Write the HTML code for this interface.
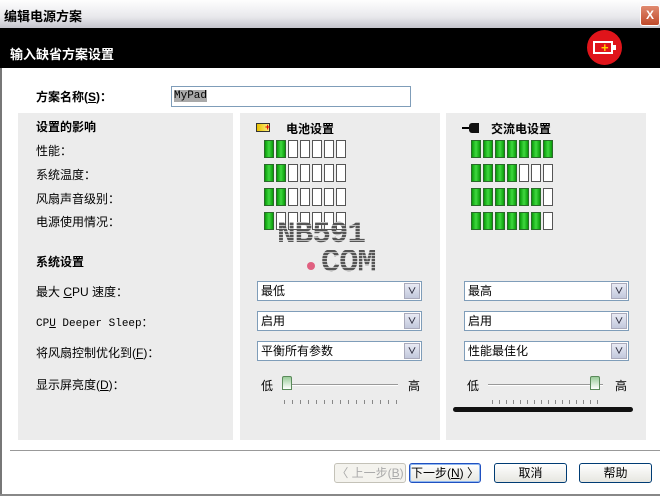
<!DOCTYPE html><html><head><meta charset="utf-8"><style>
*{margin:0;padding:0;box-sizing:border-box}
body{width:660px;height:496px;position:relative;background:#fff;font-family:"Liberation Sans","Noto Sans CJK SC","WenQuanYi Zen Hei",sans-serif;font-size:12px;color:#000;overflow:hidden}
.a{position:absolute}
.b{font-weight:bold}
.panel{position:absolute;background:#ececec;top:113px;height:327px}
.bar{position:absolute;width:10px;height:18px;border:1px solid #555;background:#fff}
.g{background:linear-gradient(90deg,#0a9a0a,#3fd93f 50%,#0a9a0a);border-color:#2a6a2a}
.sel{position:absolute;height:20px;background:#fff;border:1px solid #7f9db9;font-size:12px;line-height:18px;padding-left:3px}
.sel i{position:absolute;right:1px;top:1px;width:16px;height:16px;background:linear-gradient(#e8eaf4,#c2c8dc);border:1px solid #aab;font-style:normal;font-size:9px;line-height:14px;text-align:center;color:#334;font-weight:bold}
.btn{position:absolute;top:463px;height:20px;border:1px solid #003c74;border-radius:3px;background:linear-gradient(#fff,#e6e6e0);text-align:center;line-height:18px;font-size:12px}
.wm{position:absolute;font-family:'Liberation Mono',monospace;font-weight:bold;color:#555;background:repeating-linear-gradient(#555 0 2px,#bbb 2px 3px);-webkit-background-clip:text;background-clip:text;-webkit-text-fill-color:transparent}
</style></head><body>
<div class="a" style="left:0;top:0;width:660px;height:28px;background:linear-gradient(#fefefe,#e8e8ec 60%,#c4c4cc)"></div>
<div class="a b" style="left:4px;top:6px;font-size:13px">编辑电源方案</div>
<div class="a" style="left:640px;top:5px;width:20px;height:21px;background:linear-gradient(#e08a70,#c04a2a);border:1px solid #fff;border-radius:3px;color:#fff;text-align:center;line-height:19px;font-weight:bold">X</div>
<div class="a" style="left:0;top:28px;width:660px;height:40px;background:#000"></div>
<div class="a b" style="left:10px;top:44px;color:#fff;font-size:13px">输入缺省方案设置</div>
<div class="a" style="left:587px;top:30px;width:35px;height:35px;border-radius:50%;background:#e0141a"></div>
<div class="a" style="left:593px;top:41px;width:20px;height:13px;border:2px solid #fff"></div>
<div class="a" style="left:613px;top:45px;width:3px;height:5px;background:#fff"></div>
<div class="a b" style="left:601px;top:40px;color:#ffd400;font-size:13px">+</div>
<div class="a" style="left:0;top:68px;width:2px;height:428px;background:#777"></div>
<div class="a b" style="left:36px;top:88px;font-size:12px">方案名称(<u>S</u>)：</div>
<div class="a" style="left:171px;top:86px;width:240px;height:21px;border:1px solid #7f9db9;font-family:'Liberation Mono',monospace;font-size:11px;line-height:19px;padding-left:2px"><span style="background:#a9a9a9">MyPad</span></div>
<div class="panel" style="left:18px;width:215px"></div>
<div class="panel" style="left:240px;width:200px"></div>
<div class="panel" style="left:446px;width:200px"></div>
<div class="a b" style="left:36px;top:118px">设置的影响</div>
<div class="a" style="left:36px;top:142px">性能：</div>
<div class="a" style="left:36px;top:166px">系统温度：</div>
<div class="a" style="left:36px;top:190px">风扇声音级别：</div>
<div class="a" style="left:36px;top:213px">电源使用情况：</div>
<div class="a b" style="left:36px;top:253px">系统设置</div>
<div class="a" style="left:36px;top:283px">最大 <u>C</u>PU 速度：</div>
<div class="a" style="left:36px;top:314px;font-family:'Liberation Mono',monospace;font-size:11px">CP<u>U</u> Deeper Sleep：</div>
<div class="a" style="left:36px;top:344px">将风扇控制优化到(<u>F</u>)：</div>
<div class="a" style="left:36px;top:376px">显示屏亮度(<u>D</u>)：</div>
<div class="a" style="left:256px;top:123px;width:14px;height:9px;border:1px solid #333;background:linear-gradient(90deg,#e8c000,#fff080)"></div>
<div class="a" style="left:265px;top:124px;color:#d00;font-size:9px;font-weight:bold;line-height:7px">+</div>
<div class="a b" style="left:286px;top:120px">电池设置</div>
<div class="a" style="left:462px;top:127px;width:8px;height:2px;background:#000"></div>
<div class="a" style="left:469px;top:123px;width:10px;height:10px;background:#111;border-radius:3px 0 0 3px"></div>
<div class="a b" style="left:491px;top:120px">交流电设置</div>
<div id="bars"></div>
<div class="wm" style="left:277px;top:220px;font-size:31px;line-height:30px;letter-spacing:-1px">NB591</div>
<div class="a" style="left:307px;top:262px;width:8px;height:8px;border-radius:50%;background:#e06080"></div>
<div class="wm" style="left:321px;top:250px;font-size:32px;line-height:26px;letter-spacing:-1px">COM</div>
<div class="sel" style="left:257px;top:281px;width:165px">最低<i>∨</i></div>
<div class="sel" style="left:257px;top:311px;width:165px">启用<i>∨</i></div>
<div class="sel" style="left:257px;top:341px;width:165px">平衡所有参数<i>∨</i></div>
<div class="sel" style="left:464px;top:281px;width:165px">最高<i>∨</i></div>
<div class="sel" style="left:464px;top:311px;width:165px">启用<i>∨</i></div>
<div class="sel" style="left:464px;top:341px;width:165px">性能最佳化<i>∨</i></div>
<div class="a" style="left:261px;top:377px">低</div>
<div class="a" style="left:408px;top:377px">高</div>
<div class="a" style="left:288px;top:384px;width:110px;height:2px;border-top:1px solid #999;border-bottom:1px solid #fff"></div>
<div class="a" style="left:282px;top:376px;width:10px;height:14px;background:linear-gradient(#9c9,#fff);border:1px solid #5a8a5a;border-radius:2px 2px 0 0"></div>
<div class="a" style="left:284px;top:400px;width:120px;height:4px;background:repeating-linear-gradient(90deg,#888 0 1px,transparent 1px 8px)"></div>
<div class="a" style="left:467px;top:377px">低</div>
<div class="a" style="left:615px;top:377px">高</div>
<div class="a" style="left:488px;top:384px;width:115px;height:2px;border-top:1px solid #999;border-bottom:1px solid #fff"></div>
<div class="a" style="left:590px;top:376px;width:10px;height:14px;background:linear-gradient(#9c9,#fff);border:1px solid #5a8a5a;border-radius:2px 2px 0 0"></div>
<div class="a" style="left:492px;top:400px;width:112px;height:4px;background:repeating-linear-gradient(90deg,#888 0 1px,transparent 1px 7px)"></div>
<div class="a" style="left:453px;top:407px;width:180px;height:5px;background:#111;border-radius:3px"></div>
<div class="a" style="left:10px;top:450px;width:650px;height:2px;border-top:1px solid #999;border-bottom:1px solid #fff"></div>
<div class="btn" style="left:334px;width:72px;border-color:#c4c2b8;color:#aaa;background:#f4f3ee">〈 上一步(<u>B</u>)</div>
<div class="btn" style="left:409px;width:72px;border-color:#2050c0;box-shadow:inset 0 0 0 1px #90b8f0">下一步(<u>N</u>) 〉</div>
<div class="btn" style="left:494px;width:73px">取消</div>
<div class="btn" style="left:579px;width:73px">帮助</div>
<div class="a" style="left:0;top:494px;width:660px;height:2px;background:#888"></div>
<script>
var L=[2,2,2,1],R=[7,4,6,6],h='';
for(var r=0;r<4;r++)for(var i=0;i<7;i++){
h+='<div class="bar'+(i<L[r]?' g':'')+'" style="left:'+(264+i*12)+'px;top:'+(140+r*24)+'px"></div>';
h+='<div class="bar'+(i<R[r]?' g':'')+'" style="left:'+(471+i*12)+'px;top:'+(140+r*24)+'px"></div>';}
document.getElementById('bars').innerHTML=h;
</script>
</body></html>
